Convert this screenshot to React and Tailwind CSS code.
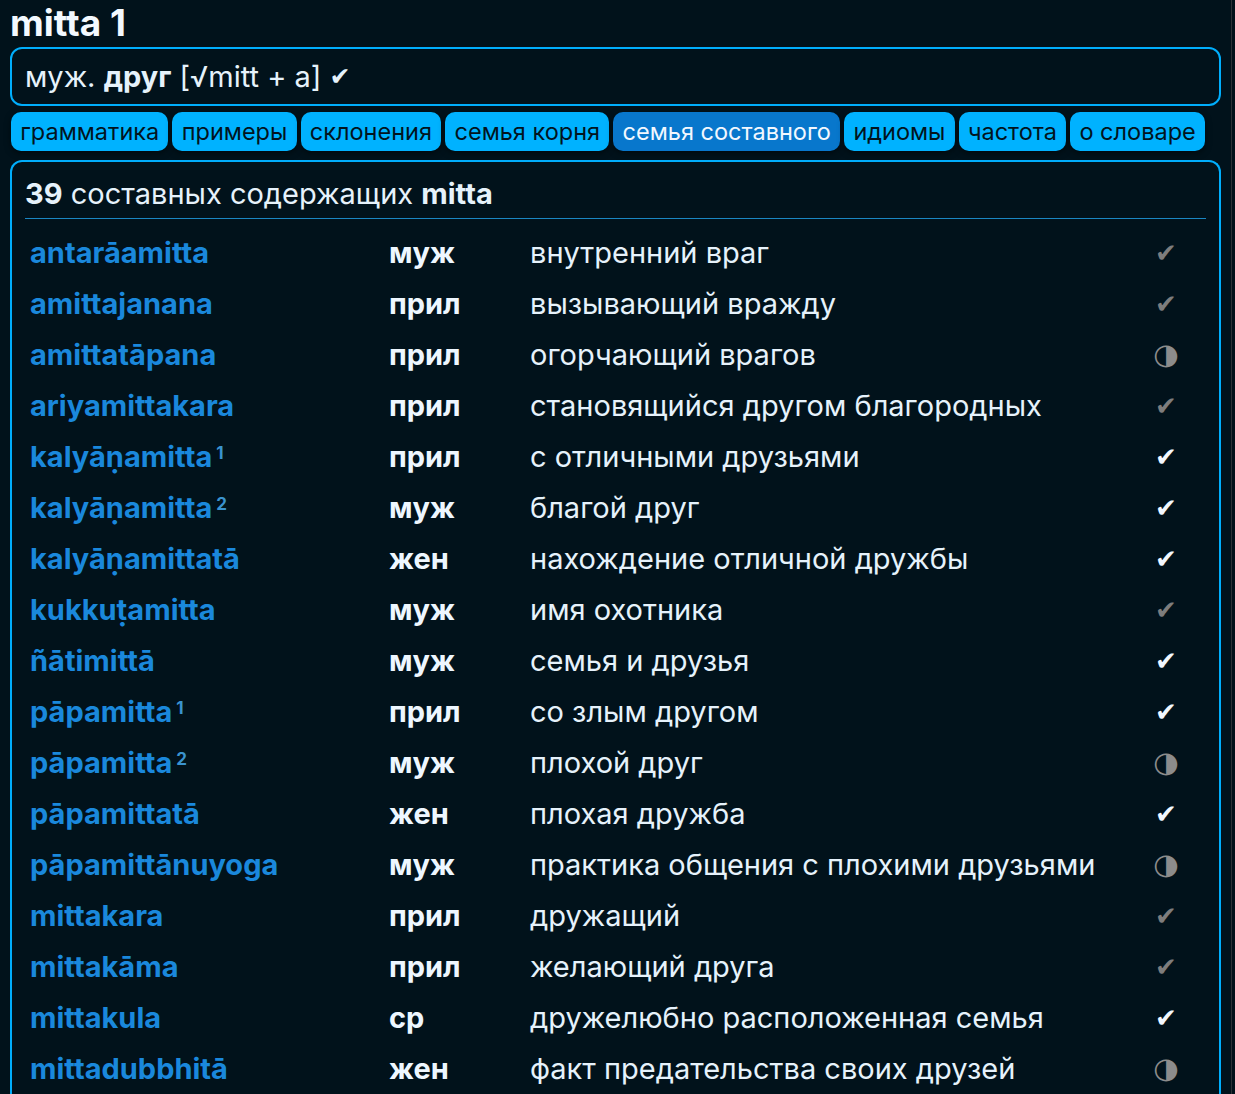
const tabs = [
  "грамматика",
  "примеры",
  "склонения",
  "семья корня",
  "семья составного",
  "идиомы",
  "частота",
  "о словаре",
];

// g = gray check, w = white check, h = half circle
const rows = [
  ["antarāamitta", "", "муж", "внутренний враг", "g"],
  ["amittajanana", "", "прил", "вызывающий вражду", "g"],
  ["amittatāpana", "", "прил", "огорчающий врагов", "h"],
  ["ariyamittakara", "", "прил", "становящийся другом благородных", "g"],
  ["kalyāṇamitta", "1", "прил", "с отличными друзьями", "w"],
  ["kalyāṇamitta", "2", "муж", "благой друг", "w"],
  ["kalyāṇamittatā", "", "жен", "нахождение отличной дружбы", "w"],
  ["kukkuṭamitta", "", "муж", "имя охотника", "g"],
  ["ñātimittā", "", "муж", "семья и друзья", "w"],
  ["pāpamitta", "1", "прил", "со злым другом", "w"],
  ["pāpamitta", "2", "муж", "плохой друг", "h"],
  ["pāpamittatā", "", "жен", "плохая дружба", "w"],
  ["pāpamittānuyoga", "", "муж", "практика общения с плохими друзьями", "h"],
  ["mittakara", "", "прил", "дружащий", "g"],
  ["mittakāma", "", "прил", "желающий друга", "g"],
  ["mittakula", "", "ср", "дружелюбно расположенная семья", "w"],
  ["mittadubbhitā", "", "жен", "факт предательства своих друзей", "h"],
];

function Mark({ kind }) {
  if (kind === "h") {
    return <span className="text-[29px] leading-none text-[#8c8c8c] font-['DejaVu_Sans',sans-serif]">◑</span>;
  }
  return (
    <span
      className={
        "text-[26px] leading-none font-['DejaVu_Sans',sans-serif] " +
        (kind === "w" ? "text-[#f2f8ff]" : "text-[#7d7d7d]")
      }
    >
      ✔
    </span>
  );
}

export default function App() {
  return (
    <div className="min-h-[1094px] bg-[#01121b] font-['Inter',sans-serif] text-[#e6f2fb]">
      <div className="w-[1232px] min-h-[1094px] border-r border-[#2c3338] pl-[10px] pr-[10px]">
        <h1 className="text-[37px] font-bold leading-[46px] text-[#f3f9ff]">mitta 1</h1>

        <div className="mt-[1px] h-[59px] rounded-[12px] border-2 border-[#00aefc] px-[13px] flex items-center text-[29px]">
          <span>муж.&nbsp;</span>
          <b className="font-bold">друг</b>
          <span>&nbsp;[√mitt + a]&nbsp;</span>
          <span className="font-['DejaVu_Sans',sans-serif] text-[25px]">✔</span>
        </div>

        <div className="mt-[6px] flex gap-[4px] pl-[1px]">
          {tabs.map((t) => (
            <div
              key={t}
              className={
                "h-[39px] rounded-[10px] px-[9.25px] flex items-center text-[23.5px] shadow-[0_2px_6px_rgba(0,0,0,0.5)] " +
                (t === "семья составного"
                  ? "bg-[#0877cc] text-[#f2f8ff]"
                  : "bg-[#00b2ff] text-[#02141e]")
              }
            >
              {t}
            </div>
          ))}
        </div>

        <div className="mt-[9px] rounded-t-[12px] border-2 border-b-0 border-[#00aefc] px-[13px] pt-[16px]">
          <div className="text-[29px] leading-[32px] pb-[8px] border-b border-[#1a86c2]">
            <b className="font-bold">39</b> составных содержащих <b className="font-bold">mitta</b>
          </div>
          <div className="pt-[8px]">
            {rows.map(([word, sup, pos, meaning, mark], i) => (
              <div
                key={i}
                className="grid grid-cols-[364px_141px_1fr_80px] h-[51px] items-center text-[29px]"
              >
                <div className="pl-[5px] font-bold text-[#1a88dc] whitespace-nowrap">
                  {word}
                  {sup && (
                    <sup className="ml-[4px] text-[17px] font-bold text-[#3a93cf] relative top-[-8px]">{sup}</sup>
                  )}
                </div>
                <div className="font-bold text-[#eef7ff]">{pos}</div>
                <div className="whitespace-nowrap">{meaning}</div>
                <div className="flex justify-center">
                  <Mark kind={mark} />
                </div>
              </div>
            ))}
          </div>
        </div>
      </div>
    </div>
  );
}
